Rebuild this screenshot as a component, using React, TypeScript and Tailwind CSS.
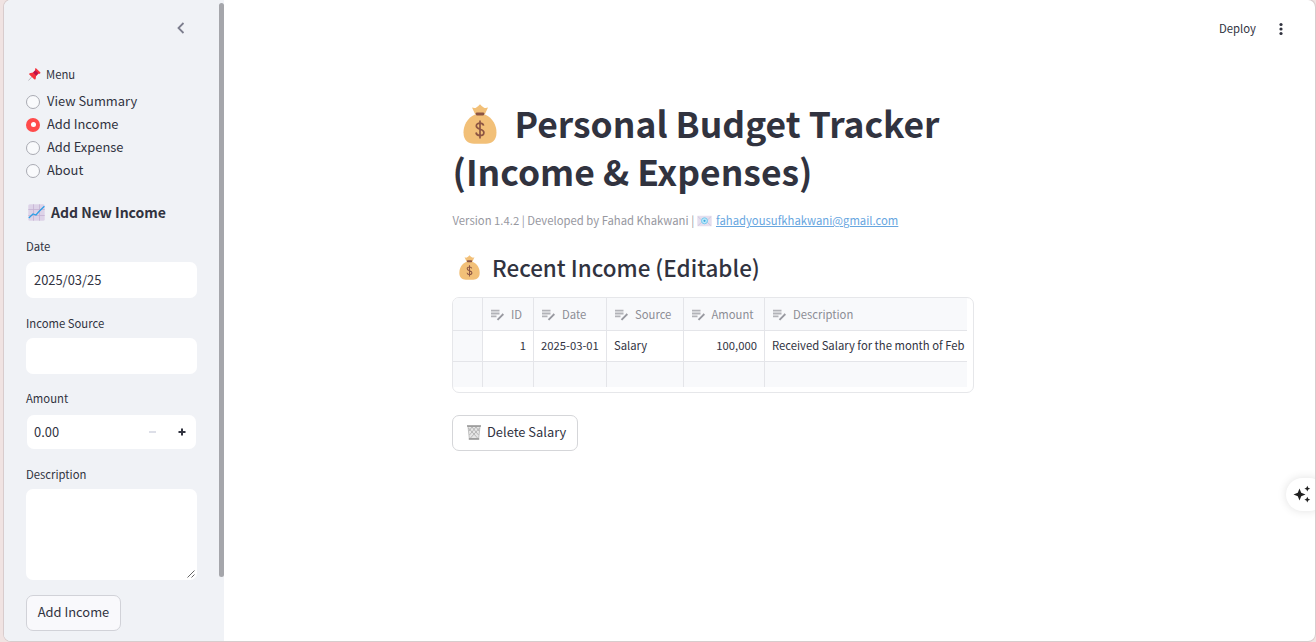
import type { ReactNode } from "react";

const FONT = "font-['Noto_Sans_CJK_SC','Noto_Sans',sans-serif]";

function MoneyBag({ className }: { className: string }) {
  return (
    <svg viewBox="0 0 34 40" className={className}>
      <path d="M12 10 9 3.6q3 1 4.300-.1Q15 2.700 17 .3q2 2.400 3.700 3.200 1.600 1.100 4.300.1L22 10Z" fill="#f2c078" />
      <path d="M12 10.500C4 14 .5 21.500.5 28.500.5 36.500 5 39.700 11 39.700h12c6 0 10.500-3.200 10.500-11.200C33.500 21.500 30 14 22 10.500Z" fill="#f2c078" />
      <rect x="12.600" y="8.400" width="8.800" height="3" rx="1.400" fill="#8c5543" />
      <path d="M20.600 21.600c-.4-1.600-1.800-2.500-3.600-2.500-2.200 0-3.700 1.100-3.700 2.900 0 4.200 7.600 2.200 7.600 6.400 0 1.900-1.600 3.100-3.900 3.100-2.200 0-3.700-1.100-4-3M17 16.500v18" fill="none" stroke="#8c5543" strokeWidth="1.700" />
    </svg>
  );
}

function Pin() {
  return (
    <svg viewBox="0 0 13 13" className="h-[13px] w-[13px]">
      <path d="M.5 12.500 4.500 8" stroke="#b9b9c0" strokeWidth="1" />
      <path d="m1.500 5.200 3.500-.8 2.200-2.200L7 .6 8 .2l4.500 4.300-.5 1.200-1.700.1-2.200 2.300-.5 3.200-1.100.2-5.300-5Z" fill="#f4323c" />
      <path d="m5.200 4.500 2.200-2.200 3 3-2.200 2.500Z" fill="#bd1049" />
    </svg>
  );
}

function Chart() {
  return (
    <svg viewBox="0 0 17 17" className="h-[17px] w-[17px]">
      <rect x=".3" y=".3" width="16.400" height="16.400" rx="1.500" fill="#ddd3e8" />
      <path d="M5.500 .3v16.400M11.500 .3v16.400M.3 5.500h16.400M.3 11.500h16.400" stroke="#c5b3d2" strokeWidth=".8" />
      <path d="M.8 14 5 10l3 1 3-3.500L16.400 2.300" fill="none" stroke="#2d9fe6" strokeWidth="1.300" />
    </svg>
  );
}

function Mail() {
  return (
    <svg viewBox="0 0 15 12" className="h-[12px] w-[15px]">
      <rect x=".3" y=".8" width="14.400" height="10.400" rx="1" fill="#e5dfee" />
      <path d="m.8 1.500 5 4.800-5 4.500M14.200 1.500l-5 4.800 5 4.500" fill="none" stroke="#cbbfd6" strokeWidth=".7" />
      <circle cx="7.500" cy="5.800" r="3" fill="#bfe9fa" stroke="#74caf0" strokeWidth="1" />
      <circle cx="7.500" cy="5.800" r="1.100" fill="#3fa9de" />
    </svg>
  );
}

function Basket() {
  return (
    <svg viewBox="0 0 14 15" className="h-[15px] w-[14px]">
      <path d="M1 1.500 2.300 13.500h9.400L13 1.500Z" fill="#e6e6e6" stroke="#aaa" strokeWidth=".7" />
      <path d="m1.500 3 9 10M5 2l6.500 8M9 2l3 4M12.500 3l-9 10M9 2 2.500 10M5 2 2 6" stroke="#a2a2a2" strokeWidth=".7" />
      <path d="M0 1h14M1.800 14h10.400" stroke="#939393" strokeWidth="1.600" />
    </svg>
  );
}

function EditIcon() {
  return (
    <svg viewBox="0 0 13 12" className="h-[12px] w-[13px] shrink-0">
      <path d="M0 1.700h8.500M0 4.500h8.500M0 7.300h5.500" stroke="#b2b3b8" strokeWidth="1.800" />
      <path d="m6.500 10.800 5-5" stroke="#96979e" strokeWidth="1.900" />
      <path d="m11.300 6 1-1" stroke="#96979e" strokeWidth="1.900" />
    </svg>
  );
}

function Label({ children, className }: { children: ReactNode; className: string }) {
  return <div className={`flex h-[16px] items-center text-[11.300px] leading-none ${className}`}>{children}</div>;
}

function Radio({ label, on }: { label: string; on?: boolean }) {
  return (
    <div className="flex h-[23px] items-center gap-[7px] text-[12.900px] leading-none">
      {on ? (
        <span className="flex h-[14px] w-[14px] items-center justify-center rounded-full bg-[#ff4b4b]">
          <span className="h-[5px] w-[5px] rounded-full bg-white" />
        </span>
      ) : (
        <span className="h-[14px] w-[14px] rounded-full border border-[#a9abb3] bg-[#f9fafc]" />
      )}
      <span>{label}</span>
    </div>
  );
}

const cols = [
  { name: "ID", w: "w-[51px]", value: "1", right: true },
  { name: "Date", w: "w-[73px]", value: "2025-03-01" },
  { name: "Source", w: "w-[76.500px]", value: "Salary" },
  { name: "Amount", w: "w-[81.500px]", value: "100,000", right: true },
  { name: "Description", w: "w-[202px]", value: "Received Salary for the month of Feb", last: true },
];

function Sidebar() {
  return (
    <aside className="flex w-[220px] shrink-0 bg-[#f0f2f6]">
      <div className="flex w-[215px] flex-col pl-[22px]">
        <div className="flex h-[56px] items-center pl-[151px]">
          <svg viewBox="0 0 8 12" className="h-[12px] w-[8px]">
            <path d="M6.500 1 1.500 6l5 5" fill="none" stroke="#7d7e8e" strokeWidth="1.800" />
          </svg>
        </div>
        <Label className="mt-[11px] gap-[5px] pl-[2px]">
          <span className="-mt-px">
            <Pin />
          </span>
          <span>Menu</span>
        </Label>
        <div className="mt-[7px]">
          <Radio label="View Summary" />
          <Radio label="Add Income" on />
          <Radio label="Add Expense" />
          <Radio label="About" />
        </div>
        <h3 className="mt-[19px] flex h-[22px] items-center gap-[6px] pl-[2px] text-[14px] leading-none font-bold">
          <Chart />
          <span>Add New Income</span>
        </h3>
        <Label className="mt-[16px]">Date</Label>
        <div className="mt-[7px] flex h-[36px] w-[171px] items-center rounded-[7px] bg-white pl-[8px] text-[12.900px] leading-none">2025/03/25</div>
        <Label className="mt-[18px]">Income Source</Label>
        <div className="mt-[6px] h-[36px] w-[171px] rounded-[7px] bg-white" />
        <Label className="mt-[17px]">Amount</Label>
        <div className="mt-[8px] ml-px flex h-[34px] w-[169px] items-center rounded-[7px] bg-white pl-[7px] text-[12.900px] leading-none">
          <span className="w-[115px]">0.00</span>
          <span className="h-[2px] w-[7px] bg-[#dddfe8]" />
          <svg viewBox="0 0 8 8" className="ml-[21.500px] h-[8px] w-[8px]">
            <path d="M.5 4h7M4 .5v7" stroke="#31333f" strokeWidth="2" />
          </svg>
        </div>
        <Label className="mt-[18px]">Description</Label>
        <div className="mt-[6px] flex h-[91px] w-[171px] items-end justify-end rounded-[7px] bg-white pr-[2px] pb-[2px]">
          <svg viewBox="0 0 8 8" className="h-[8px] w-[8px]">
            <path d="m.5 7.500 7-7M4.500 7.500l3-3" stroke="#555" strokeWidth=".9" />
          </svg>
        </div>
        <button className="mt-[15px] flex h-[36px] w-[95px] items-center justify-center rounded-[7px] border border-[#d1d2d8] bg-[#f9f9fc] pb-[2px] text-[12.900px] leading-none">Add Income</button>
      </div>
      <div className="mt-[3px] h-[574px] w-[5px] rounded-[3px] bg-[#a5a6ab]" />
    </aside>
  );
}

export default function App() {
  return (
    <div className={`h-[642px] w-[1316px] overflow-hidden bg-[#f0e3e2] pr-px pb-px pl-[4px] text-[#31333f] ${FONT}`}>
      <div className="relative flex h-[641px] w-[1311px] overflow-hidden rounded-[7px] bg-white shadow-[0_0_0_1px_#d8cccd]">
        <Sidebar />
        <main className="flex flex-1 flex-col">
          <header className="flex h-[58px] items-center pl-[995px] text-[11.300px] leading-none">
            <span className="w-[60px] shrink-0">Deploy</span>
            <svg viewBox="0 0 4 14" className="h-[14px] w-[4px] shrink-0">
              <circle cx="2" cy="2.500" r="1.600" fill="#31333f" />
              <circle cx="2" cy="7" r="1.600" fill="#31333f" />
              <circle cx="2" cy="11.500" r="1.600" fill="#31333f" />
            </svg>
          </header>
          <div className="ml-[228px] flex w-[522px] flex-col pt-[41px]">
            <h1 className="text-[35.450px] leading-[48px] font-bold whitespace-nowrap">
              <span className="flex items-center">
                <MoneyBag className="mt-[2px] mr-[18px] ml-[10.500px] h-[40px] w-[34px]" />
                <span>Personal Budget Tracker</span>
              </span>
              <span className="block pl-[0.500px]">(Income &amp; Expenses)</span>
            </h1>
            <div className="mt-[16px] flex h-[20px] items-center text-[11.300px] leading-none whitespace-nowrap text-[#97989f]">
              <span className="w-[245px] pl-[0.500px]">Version 1.4.2 | Developed by Fahad Khakwani |</span>
              <Mail />
              <a className="ml-[4px] text-[#67a6df] underline">fahadyousufkhakwani@gmail.com</a>
            </div>
            <h2 className="mt-[18px] flex h-[36px] items-center text-[22.430px] leading-none font-medium">
              <MoneyBag className="mr-[12px] ml-[7px] h-[25px] w-[21px]" />
              <span>Recent Income (Editable)</span>
            </h2>
            <div className="mt-[12px] h-[96px] w-[522px] overflow-hidden rounded-[7px] border border-[#e6e7ea] text-[11.280px] leading-none whitespace-nowrap">
              <div className="flex w-[514px]">
                <div className="flex w-[30px] shrink-0 flex-col border-r border-[#e4e5e9] bg-[#f8f9fb]">
                  <div className="h-[33px] border-b border-[#e4e5e9]" />
                  <div className="h-[31px] border-b border-[#e4e5e9]" />
                  <div className="h-[25px]" />
                </div>
                {cols.map((c) => (
                  <div key={c.name} className={`flex shrink-0 flex-col ${c.w} ${c.last ? "" : "border-r border-[#e4e5e9]"}`}>
                    <div className="flex h-[33px] items-center gap-[7px] border-b border-[#e4e5e9] bg-[#f8f9fb] pt-px pl-[8px] text-[#8c8d95]">
                      <EditIcon />
                      <span>{c.name}</span>
                    </div>
                    <div className={`flex h-[31px] items-center border-b border-[#e4e5e9] px-[7px] ${c.right ? "justify-end" : ""}`}>{c.value}</div>
                    <div className="h-[25px] bg-[#f8f9fb]" />
                  </div>
                ))}
              </div>
            </div>
            <button className="mt-[22px] flex h-[36px] w-[126px] items-center rounded-[7px] border border-[#d5d6d9] bg-white pb-[2px] pl-[14px] text-[12.900px] leading-none whitespace-nowrap">
              <Basket />
              <span className="ml-[6px]">Delete Salary</span>
            </button>
          </div>
        </main>
        <div className="absolute top-[478px] left-[1282px] flex h-[33px] w-[40px] items-center rounded-full bg-white pb-[2px] pl-[7px] shadow-[0_0_10px_rgba(0,0,0,0.12)]">
          <svg viewBox="0 0 18 18" className="h-[18px] w-[18px]">
            <path d="M6.500 3.500 8.200 7.800 12.500 9.500 8.200 11.200 6.500 15.500 4.800 11.200.5 9.500 4.800 7.800ZM14.300.8l.9 2 2 .9-2 .9-.9 2-.9-2-2-.9 2-.9ZM14.300 11.800l.9 2 2 .9-2 .9-.9 2-.9-2-2-.9 2-.9Z" fill="#1f1f1f" />
          </svg>
        </div>
      </div>
    </div>
  );
}
